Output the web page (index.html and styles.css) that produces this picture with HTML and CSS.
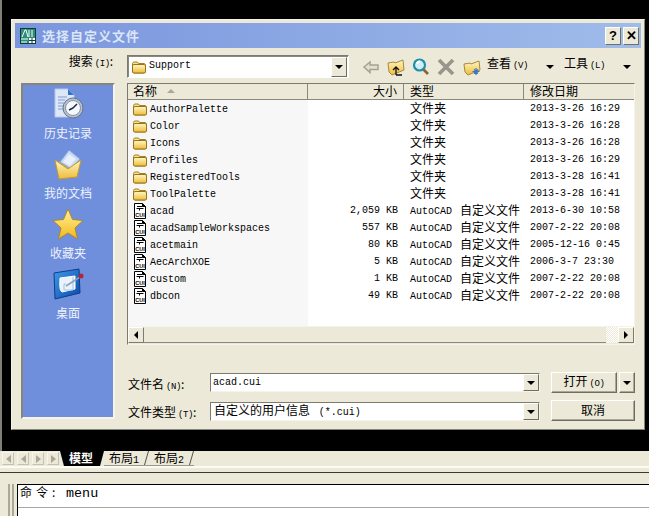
FILE: index.html
```html
<!DOCTYPE html>
<html lang="zh">
<head>
<meta charset="utf-8">
<title>选择自定义文件</title>
<link rel="stylesheet" href="styles.css">
</head>
<body>
<svg class="defs" width="0" height="0" aria-hidden="true">
  <defs>
    <linearGradient id="gFolder" x1="0" y1="0" x2="0" y2="1"><stop offset="0" stop-color="#fff7c4"/><stop offset="1" stop-color="#eebb3a"/></linearGradient>
    <linearGradient id="gStar" x1="0" y1="0" x2="0" y2="1"><stop offset="0" stop-color="#fff39a"/><stop offset="1" stop-color="#f4b71c"/></linearGradient>
    <linearGradient id="gBlue" x1="0" y1="0" x2="1" y2="1"><stop offset="0" stop-color="#3f9be8"/><stop offset="1" stop-color="#0b49a8"/></linearGradient>
    <symbol id="folder" viewBox="0 0 16 16">
      <path d="M1.500 13V4.500l1-1.500h4l1 1.500h6l1 1V13l-1 1h-11z" fill="#f8e08c" stroke="#a5811f"/>
      <path d="M1.500 13V7l1-1.500h11l1 1.500v6l-1 1h-11z" fill="url(#gFolder)" stroke="#96741a"/>
    </symbol>
    <symbol id="cui" viewBox="0 0 16 16">
      <path d="M2.500 .5h8l3 3v12h-11z" fill="#fff" stroke="#000"/>
      <path d="M10.500 .5v3h3" fill="#000" stroke="#000"/>
      <path d="M5 3.500h5M4.500 5.500h7M7.500 5.500v2" stroke="#000" fill="none"/>
      <text x="8" y="13.500" text-anchor="middle" class="cuitext">CUI</text>
    </symbol>
  </defs>
</svg>

<div class="workspace">
  <section class="dialog">
    <header class="titlebar">
      <svg class="appicon" width="16" height="16" viewBox="0 0 16 16">
        <rect width="16" height="16" fill="#0c3f3a"/>
        <rect x="1" y="1" width="14" height="14" fill="#2b8f78"/>
        <path d="M2 9l3-7h1l2 7M9 2v7M12 2v7" stroke="#fff" fill="none"/>
        <path d="M1 11h7M1 14h6" stroke="#fff"/>
        <rect x="9" y="10" width="6" height="5" fill="#fff"/>
        <path d="M12 10v5M9 12.500h6" stroke="#0c3f3a"/>
      </svg>
      <h1 class="titletext">选择自定义文件</h1>
      <div class="winbtns">
        <span class="winbtn">?</span>
        <span class="winbtn">✕</span>
      </div>
    </header>

    <div class="body">
      <div class="searchlabel">搜索<span class="mono key">(I)</span>:</div>
      <div class="toprow">
        <div class="combo-look">
          <svg class="ico16" width="16" height="16"><use href="#folder"/></svg>
          <span class="mono combotext">Support</span>
          <span class="dropbtn tall"><i class="tri"></i></span>
        </div>
        <div class="toolbar">
          <svg class="tool" width="20" height="20" viewBox="0 0 20 20"><path d="M3 10l6-5v3h8v4.500H9v3z" fill="#e2dfd0" stroke="#a5a293" stroke-width="1.500"/></svg>
          <svg class="tool" width="20" height="20" viewBox="0 0 20 20">
            <path d="M2 6l6-1 1 1 8-3 1 10-12 5-3-3z" fill="url(#gFolder)" stroke="#a68a3c"/>
            <path d="M10 18v-7M7 13l3-3 3 3M10 18h6" stroke="#111" fill="none" stroke-width="1.300"/>
          </svg>
          <svg class="tool" width="20" height="20" viewBox="0 0 20 20">
            <circle cx="8.500" cy="8" r="5.500" fill="#cfeef5" stroke="#1f8fab" stroke-width="2.200"/>
            <path d="M6 7a3 3 0 0 1 3-2.500" stroke="#fff" stroke-width="1.800" fill="none"/>
            <path d="M12.500 12.500l4.500 4.500" stroke="#8a6236" stroke-width="2.600"/>
          </svg>
          <svg class="tool" width="20" height="20" viewBox="0 0 20 20"><path d="M3 3l14 14M17 3L3 17" stroke="#98958a" stroke-width="3.600"/></svg>
          <svg class="tool" width="20" height="20" viewBox="0 0 20 20">
            <path d="M2 7l6-1 1 1 8-3 1 9-12 5-3-3z" fill="url(#gFolder)" stroke="#a68a3c"/>
            <path d="M14 11v7M10.500 14.500h7M12 12.500l4 4M16 12.500l-4 4" stroke="#3d78c8" stroke-width="1.200"/>
          </svg>
          <span class="menu cn">查看<span class="mono key">(V)</span></span>
          <i class="tri tri-menu"></i>
          <span class="menu cn">工具<span class="mono key">(L)</span></span>
          <i class="tri tri-menu last"></i>
        </div>
      </div>

      <nav class="places">
        <div class="place">
          <svg width="32" height="32" viewBox="0 0 32 32">
            <path d="M3 1h13l6 6v22H3z" fill="#dde7f7" stroke="#b7c7e6"/>
            <path d="M16 1l6 6h-6z" fill="#2f74cf"/>
            <path d="M6 9h9M6 12h7M6 15h6M6 18h6M6 21h6" stroke="#7e9dd4"/>
            <circle cx="21" cy="20" r="10" fill="#b9c2cf" stroke="#66738a"/>
            <circle cx="21" cy="20" r="7.500" fill="#f4f7fb" stroke="#8792a6"/>
            <path d="M21 20l4-4M21 20l-4 2" stroke="#1d2a44" stroke-width="1.500"/>
          </svg>
          <span class="placelabel">历史记录</span>
        </div>
        <div class="place">
          <svg width="32" height="32" viewBox="0 0 32 32">
            <path d="M4 14l12-1 12-3-3 19-18 1z" fill="#d9a83a"/>
            <path d="M8 14L17 2l11 9-9 10z" fill="#c7d9f4" stroke="#86a3d8"/>
            <path d="M11 14l6-8 7 5-6 7z" fill="#e9f0fb"/>
            <path d="M3 12l13 9 13-9-4 17-18 2z" fill="url(#gFolder)" stroke="#c49a30"/>
          </svg>
          <span class="placelabel">我的文档</span>
        </div>
        <div class="place">
          <svg width="32" height="32" viewBox="0 0 32 32">
            <path d="M16 1l4.500 10.500L31 12.500l-8 7.500 2.500 11L16 25l-9.500 6L9 20l-8-7.500 10.500-1z" fill="url(#gStar)" stroke="#a88a2c"/>
          </svg>
          <span class="placelabel">收藏夹</span>
        </div>
        <div class="place">
          <svg width="32" height="32" viewBox="0 0 32 32">
            <path d="M2 5l25-4 1 24-25 6z" fill="url(#gBlue)" stroke="#0b3d8c"/>
            <path d="M8 10q-1 13 2 14l13-3V8z" fill="#eaf3fc" stroke="#fff"/>
            <path d="M14 16h-2v6h9V9" fill="none" stroke="#9fc1e6"/>
            <path d="M14 18l14-9" stroke="#8d9fb8" stroke-width="1.500"/>
            <circle cx="29" cy="8" r="2.500" fill="#b0243c"/>
          </svg>
          <span class="placelabel">桌面</span>
        </div>
      </nav>

      <div class="main">
        <div class="filelist">
          <div class="listhead">
            <div class="hcell cn">名称<i class="sortarrow"></i></div>
            <div class="hcell cn right">大小</div>
            <div class="hcell cn">类型</div>
            <div class="hcell cn">修改日期</div>
          </div>
          <div class="rows">
            <div class="row"><div class="namecell"><svg width="16" height="16"><use href="#folder"/></svg><span class="nametext">AuthorPalette</span></div><div class="size"></div><div class="type"><span class="cn">文件夹</span></div><div class="date">2013-3-26 16:29</div></div>
            <div class="row"><div class="namecell"><svg width="16" height="16"><use href="#folder"/></svg><span class="nametext">Color</span></div><div class="size"></div><div class="type"><span class="cn">文件夹</span></div><div class="date">2013-3-26 16:28</div></div>
            <div class="row"><div class="namecell"><svg width="16" height="16"><use href="#folder"/></svg><span class="nametext">Icons</span></div><div class="size"></div><div class="type"><span class="cn">文件夹</span></div><div class="date">2013-3-26 16:28</div></div>
            <div class="row"><div class="namecell"><svg width="16" height="16"><use href="#folder"/></svg><span class="nametext">Profiles</span></div><div class="size"></div><div class="type"><span class="cn">文件夹</span></div><div class="date">2013-3-26 16:29</div></div>
            <div class="row"><div class="namecell"><svg width="16" height="16"><use href="#folder"/></svg><span class="nametext">RegisteredTools</span></div><div class="size"></div><div class="type"><span class="cn">文件夹</span></div><div class="date">2013-3-28 16:41</div></div>
            <div class="row"><div class="namecell"><svg width="16" height="16"><use href="#folder"/></svg><span class="nametext">ToolPalette</span></div><div class="size"></div><div class="type"><span class="cn">文件夹</span></div><div class="date">2013-3-28 16:41</div></div>
            <div class="row"><div class="namecell"><svg width="16" height="16"><use href="#cui"/></svg><span class="nametext">acad</span></div><div class="size">2,059 KB</div><div class="type"><span class="mono">AutoCAD</span><span class="cn gap">自定义文件</span></div><div class="date">2013-6-30 10:58</div></div>
            <div class="row"><div class="namecell"><svg width="16" height="16"><use href="#cui"/></svg><span class="nametext">acadSampleWorkspaces</span></div><div class="size">557 KB</div><div class="type"><span class="mono">AutoCAD</span><span class="cn gap">自定义文件</span></div><div class="date">2007-2-22 20:08</div></div>
            <div class="row"><div class="namecell"><svg width="16" height="16"><use href="#cui"/></svg><span class="nametext">acetmain</span></div><div class="size">80 KB</div><div class="type"><span class="mono">AutoCAD</span><span class="cn gap">自定义文件</span></div><div class="date">2005-12-16 0:45</div></div>
            <div class="row"><div class="namecell"><svg width="16" height="16"><use href="#cui"/></svg><span class="nametext">AecArchXOE</span></div><div class="size">5 KB</div><div class="type"><span class="mono">AutoCAD</span><span class="cn gap">自定义文件</span></div><div class="date">2006-3-7 23:30</div></div>
            <div class="row"><div class="namecell"><svg width="16" height="16"><use href="#cui"/></svg><span class="nametext">custom</span></div><div class="size">1 KB</div><div class="type"><span class="mono">AutoCAD</span><span class="cn gap">自定义文件</span></div><div class="date">2007-2-22 20:08</div></div>
            <div class="row"><div class="namecell"><svg width="16" height="16"><use href="#cui"/></svg><span class="nametext">dbcon</span></div><div class="size">49 KB</div><div class="type"><span class="mono">AutoCAD</span><span class="cn gap">自定义文件</span></div><div class="date">2007-2-22 20:08</div></div>
          </div>
          <div class="hscroll">
            <span class="sbtn"><i class="tri-left"></i></span>
            <span class="strack"></span>
            <span class="sthumbgap"></span>
            <span class="sbtn"><i class="tri-right"></i></span>
          </div>
        </div>

        <div class="formrow">
          <label class="flabel cn">文件名<span class="mono key">(N)</span>:</label>
          <div class="field">
            <span class="mono fieldtext">acad.cui</span>
            <span class="dropbtn"><i class="tri"></i></span>
          </div>
          <button class="btn btn-open cn" type="button">打开<span class="mono key">(O)</span></button>
          <button class="btn btn-drop" type="button"><i class="tri"></i></button>
        </div>
        <div class="formrow second">
          <label class="flabel cn">文件类型<span class="mono key">(T)</span>:</label>
          <div class="field field-type">
            <span class="fieldtext cn">自定义的用户信息 <span class="mono">&nbsp;(*.cui)</span></span>
            <span class="dropbtn"><i class="tri"></i></span>
          </div>
          <button class="btn btn-cancel cn" type="button">取消</button>
        </div>
      </div>
    </div>
  </section>
</div>

<div class="tabbar">
  <div class="tabnav">
    <span class="navbtn"><i class="nb nb-first"></i></span>
    <span class="navbtn"><i class="nb nb-prev"></i></span>
    <span class="navbtn"><i class="nb nb-next"></i></span>
    <span class="navbtn"><i class="nb nb-last"></i></span>
  </div>
  <span class="tab active cn">模型</span>
  <span class="tab cn">布局<span class="mono">1</span></span>
  <span class="tab cn">布局<span class="mono">2</span></span>
</div>

<div class="cmdarea">
  <div class="grip"></div>
  <div class="cmdbox">
    <div class="cmdline cn">命令: <span class="mono cmdword">menu</span></div>
    <div class="cmdinput"></div>
  </div>
</div>
</body>
</html>
```
FILE: styles.css
```css
* { box-sizing: border-box; }
html, body { margin: 0; padding: 0; }
body {
  width: 649px;
  height: 516px;
  overflow: hidden;
  background: #ece9d8;
  color: #000;
  font: 12px/14px "Noto Sans CJK SC", sans-serif;
}
.defs { position: absolute; }
.mono { font-family: "Liberation Mono", monospace; font-size: 10px; }
.cn { font-family: "Noto Sans CJK SC", sans-serif; font-size: 12px; }
.key { font-size: 9px; margin-left: 2px; letter-spacing: -0.4px; }

.workspace {
  height: 451px;
  background: #000;
  border-left: 2px solid #808078;
  padding: 19px 4px 21px 9px;
}
.dialog {
  height: 411px;
  width: 634px;
  background: #ece9d8;
  padding: 3px;
  border: 1px solid;
  border-color: #f4f2e8 #85837a #85837a #f4f2e8;
  display: flex;
  flex-direction: column;
}
.titlebar {
  height: 25px;
  flex: none;
  display: flex;
  align-items: center;
  padding: 0 2px 0 5px;
  background: linear-gradient(90deg, #7a95dd, #a0bcea);
}
.appicon { flex: none; }
.titletext {
  margin: 0 0 0 6px;
  font: 700 13px/16px "Noto Sans CJK SC", sans-serif;
  letter-spacing: 1px;
  color: #dbe6f8;
  flex: 1;
}
.winbtns { display: flex; gap: 2px; }
.winbtn {
  width: 16px;
  height: 18px;
  background: #ece9d8;
  border: 1px solid;
  border-color: #fff #716f64 #716f64 #fff;
  font: 700 13px/16px "Liberation Sans", sans-serif;
  text-align: center;
}

.body {
  flex: 1;
  display: grid;
  grid-template-columns: 94px 1fr;
  grid-template-rows: 24px 336px;
  column-gap: 12px;
  row-gap: 5px;
  padding: 6px 0 0 6px;
}
.searchlabel { text-align: right; padding-right: 2px; white-space: pre; }

.toprow { display: flex; align-items: center; margin-top: 1px; }
.combo-look {
  width: 222px;
  height: 23px;
  display: flex;
  align-items: flex-start;
  background: #fff;
  border: 1px solid;
  border-color: #7d7b70 #fff #fff #7d7b70;
  box-shadow: inset 1px 1px 0 #8a887c;
  padding: 1px 1px 0 3px;
}
.ico16 { flex: none; margin-top: 2px; }
.combotext { flex: 1; margin-left: 2px; line-height: 18px; }
.dropbtn {
  flex: none;
  width: 16px;
  height: 17px;
  display: flex;
  align-items: center;
  justify-content: center;
  background: #ece9d8;
  border: 1px solid;
  border-color: #fff #6f6d62 #6f6d62 #fff;
}
.dropbtn.tall { height: 20px; }
.tri {
  display: block;
  width: 0;
  height: 0;
  border-left: 4px solid transparent;
  border-right: 4px solid transparent;
  border-top: 4px solid #000;
}
.toolbar { display: flex; align-items: center; margin-left: 12px; height: 23px; }
.tool { flex: none; margin-right: 5px; }
.tool:nth-child(4) { margin-right: 6px; }
.menu { white-space: nowrap; padding-bottom: 4px; }
.tri-menu { display: block; width: 0; height: 0; margin: 0 10px 0 18px; border-left: 4px solid transparent; border-right: 4px solid transparent; border-top: 4px solid #000; }
.tri-menu.last { margin-right: 0; margin-left: 18px; }

.places {
  background: #6f8fdc;
  border: 2px solid;
  border-color: #87857a #f6f4ea #f6f4ea #87857a;
  padding-top: 3px;
  display: flex;
  flex-direction: column;
  align-items: center;
}
.place {
  height: 60px;
  display: flex;
  flex-direction: column;
  align-items: center;
  gap: 6px;
  flex: none;
}
.place svg { flex: none; }
.placelabel { color: #eef2fc; line-height: 14px; }

.main { display: flex; flex-direction: column; width: 509px; min-height: 0; }
.filelist {
  width: 508px;
  height: 262px;
  flex: none;
  background: #fff;
  border: 1px solid;
  border-color: #7d7b70 #f6f4ea #f6f4ea #7d7b70;
  display: flex;
  flex-direction: column;
}
.listhead {
  display: grid;
  grid-template-columns: 180px 96px 120px 1fr;
  height: 16px;
  flex: none;
  background: #ece9d8;
  border-bottom: 1px solid #8a887c;
}
.hcell {
  border-right: 1px solid #8a887c;
  padding: 0 6px 1px;
  line-height: 14px;
  display: flex;
  align-items: center;
}
.hcell:first-child { padding-left: 5px; }
.hcell:last-child { border-right: 0; }
.hcell.right { justify-content: flex-end; }
.sortarrow {
  margin-left: 10px;
  width: 0;
  height: 0;
  border-left: 4px solid transparent;
  border-right: 4px solid transparent;
  border-bottom: 4px solid #aca899;
}
.rows { flex: 1; display: flex; flex-direction: column; background: linear-gradient(90deg, #f7f7f7 180px, #fff 180px); }
.row {
  height: 17px;
  flex: none;
  display: grid;
  grid-template-columns: 180px 96px 120px 1fr;
  grid-template-rows: 17px;
  align-items: start;
  font: 10px/16px "Liberation Mono", monospace;
  white-space: nowrap;
}
.namecell { display: flex; align-items: center; padding-left: 4px; gap: 2px; height: 17px; }
.namecell svg { flex: none; }
.nametext { padding-top: 2px; line-height: 15px; }
.size { text-align: right; padding: 1px 6px 0 0; height: 17px; }
.date { padding: 1px 0 0 6px; height: 17px; }
.type { padding-left: 6px; height: 17px; display: flex; align-items: center; }
.type .cn { line-height: 14px; padding-bottom: 1px; }
.type .mono { padding-top: 2px; line-height: 15px; }
.type .gap { margin-left: 8px; }

.hscroll {
  height: 18px;
  flex: none;
  display: flex;
  background: #ece9d8;
  border-top: 1px solid #f6f4ea;
  padding-bottom: 1px;
}
.sbtn {
  width: 16px;
  flex: none;
  display: flex;
  align-items: center;
  justify-content: center;
  border: 1px solid;
  border-color: #fff #7d7b70 #7d7b70 #fff;
  background: #ece9d8;
}
.strack { flex: 1; border-bottom: 1px solid #8a887c; }
.sthumbgap {
  width: 12px;
  flex: none;
  background: repeating-conic-gradient(#fff 0 25%, #ece9d8 0 50%) 0 0 / 2px 2px;
}
.tri-left { border-top: 4px solid transparent; border-bottom: 4px solid transparent; border-right: 4px solid #000; }
.tri-right { border-top: 4px solid transparent; border-bottom: 4px solid transparent; border-left: 4px solid #000; }

.formrow { display: flex; align-items: center; height: 21px; margin-top: 27px; flex: none; }
.formrow.second { margin-top: 7px; align-items: flex-end; }
.flabel { width: 83px; flex: none; padding-left: 1px; padding-top: 5px; white-space: pre; }
.second .flabel { padding: 0 0 0 1px; margin-bottom: -1px; }
.field {
  width: 330px;
  height: 19px;
  flex: none;
  display: flex;
  align-items: center;
  background: #fff;
  border: 1px solid;
  border-color: #7d7b70 #f6f4ea #f6f4ea #7d7b70;
}
.fieldtext { flex: 1; padding-left: 2px; line-height: 14px; white-space: nowrap; }
.field-type .fieldtext { padding-left: 3px; }
.btn {
  margin: 0;
  padding: 0;
  height: 21px;
  flex: none;
  background: #ece9d8;
  color: #000;
  border: 1px solid;
  border-color: #fff #6f6d62 #6f6d62 #fff;
  box-shadow: inset -1px -1px 0 #aca899;
  line-height: 14px;
  white-space: pre;
}
.btn-open { width: 66px; margin-left: 11px; }
.btn-drop { width: 16px; margin-left: 2px; display: flex; align-items: center; justify-content: center; }
.btn-cancel { width: 84px; margin-left: 11px; padding-bottom: 2px; }

.tabbar {
  height: 15px;
  display: flex;
  align-items: flex-start;
  padding-left: 2px;
  background: #ece9d8;
}
.tabnav { display: flex; width: 58px; flex: none; padding-top: 1px; }
.navbtn {
  width: 12px;
  height: 13px;
  margin-right: 3px;
  display: flex;
  align-items: center;
  justify-content: center;
  border: 1px solid;
  border-color: #f8f6ec #c4c1b0 #c4c1b0 #f8f6ec;
}
.navbtn:last-child { margin-right: 0; }
.nb { display: block; width: 0; height: 0; border-top: 4px solid transparent; border-bottom: 4px solid transparent; }
.nb-first, .nb-prev { border-right: 5px solid #aaa79a; }
.nb-next, .nb-last { border-left: 5px solid #aaa79a; }
.tab {
  position: relative;
  height: 15px;
  line-height: 13px;
  width: 45px;
  padding-left: 5px;
  flex: none;
  border-bottom: 1px solid #9a988c;
  white-space: nowrap;
}
.tab::after {
  content: "";
  position: absolute;
  right: 2px;
  top: 0;
  height: 14px;
  border-right: 1px solid #55534a;
  transform: skewX(-16deg);
}
.tab.active {
  width: 44px;
  padding-left: 9px;
  border-bottom: 0;
  background: #000;
  color: #fff;
  font-weight: 700;
  clip-path: polygon(0 0, 100% 0, 91% 100%, 9% 100%);
}
.tab.active::after { display: none; }

.cmdarea {
  height: 50px;
  display: flex;
  padding: 18px 0 0 8px;
  background: #ece9d8;
  box-shadow: inset 0 2px 0 #fbfaf3;
  position: relative;
}
.cmdarea::before {
  content: "";
  position: absolute;
  left: 0;
  right: 0;
  top: 6px;
  border-top: 1px solid #3a3a34;
}
.grip {
  width: 6px;
  flex: none;
  margin-right: 3px;
  border-left: 2px solid #aca899;
  border-right: 2px solid #aca899;
}
.cmdbox { flex: 1; background: #fff; border-top: 1px solid #000; border-left: 1px solid #000; }
.cmdline {
  height: 23px;
  padding-left: 2px;
  line-height: 14px;
  letter-spacing: 4px;
  border-bottom: 1px solid #a8a8a0;
}
.cmdword { font-size: 13.400px; letter-spacing: 0; }
.cmdinput { height: 9px; }
.cuitext { font: 700 5.500px "Liberation Sans", sans-serif; fill: #000; }
```
